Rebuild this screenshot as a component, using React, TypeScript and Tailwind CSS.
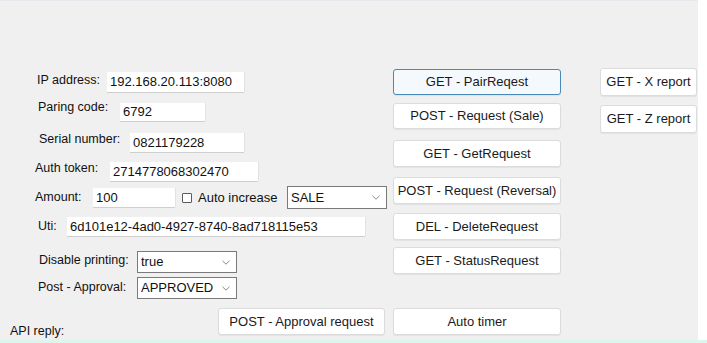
import React from 'react';

const font = { fontFamily: '"Liberation Sans", Arial, sans-serif' };

const Chevron: React.FC = () => (
  <svg width="8" height="5" viewBox="0 0 8 5" className="shrink-0">
    <path d="M0.5 0.8 L4 4.2 L7.5 0.8" fill="none" stroke="#8a8a8a" strokeWidth="1" />
  </svg>
);

const TextBox: React.FC<{ value: string; w: string; h: string; mt?: string }> = ({ value, w, h, mt = '' }) => (
  <div
    className={`${w} ${h} ${mt} shrink-0 bg-white pl-[3px] flex items-center text-[13px] text-[#111] shadow-[0_1px_0_#cfcfcf,1px_0_0_#e2e2e2] overflow-hidden whitespace-nowrap`}
  >
    {value}
  </div>
);

const Dropdown: React.FC<{ value: string; w: string; h: string; mt?: string }> = ({ value, w, h, mt = '' }) => (
  <div
    className={`${w} ${h} ${mt} shrink-0 bg-white border border-[#7a7a7a] pl-[3px] pr-[6px] flex items-center justify-between text-[13px] text-[#111]`}
  >
    <span>{value}</span>
    <Chevron />
  </div>
);

const Label: React.FC<{ text: string; ml: string; w: string; mt?: string }> = ({ text, ml, w, mt = '' }) => (
  <span className={`${ml} ${w} ${mt} shrink-0 text-[12.5px] leading-[15px] text-[#111] whitespace-nowrap`}>{text}</span>
);

const Btn: React.FC<{ text: string; h: string; mt: string; active?: boolean }> = ({ text, h, mt, active }) => (
  <button
    className={`${h} ${mt} w-full shrink-0 rounded-[3px] border text-[13px] text-[#1a1a1a] flex items-center justify-center shadow-[0_1px_1px_rgba(0,0,0,0.06)] ${
      active ? 'border-[#4a8ab8] bg-[#f4f9fd]' : 'border-[#dcdcdc] bg-white'
    }`}
  >
    {text}
  </button>
);

const App: React.FC = () => {
  return (
    <div className="w-[707px] h-[343px] flex flex-col overflow-hidden" style={font}>
      <div className="flex h-[340px]">
        <div className="w-[698px] h-full bg-[#f0f0f0] border-t border-[#e6e8ee] flex">
          {/* left form */}
          <div className="w-[393px] flex flex-col pt-[71px]">
            <div className="h-[28px] flex items-start">
              <Label text="IP address:" ml="ml-[37px]" w="w-[70px]" mt="mt-[1px]" />
              <TextBox value="192.168.20.113:8080" w="w-[137px]" h="h-[20px]" />
            </div>
            <div className="h-[32px] flex items-start">
              <Label text="Paring code:" ml="ml-[38px]" w="w-[82px]" />
              <TextBox value="6792" w="w-[85px]" h="h-[18px]" mt="mt-[3px]" />
            </div>
            <div className="h-[29px] flex items-start">
              <Label text="Serial number:" ml="ml-[39px]" w="w-[91px]" />
              <TextBox value="0821179228" w="w-[114px]" h="h-[19px]" mt="mt-[1px]" />
            </div>
            <div className="h-[25px] flex items-start">
              <Label text="Auth token:" ml="ml-[35px]" w="w-[75px]" />
              <TextBox value="2714778068302470" w="w-[148px]" h="h-[19px]" mt="mt-[1px]" />
            </div>
            <div className="h-[31px] flex items-start">
              <Label text="Amount:" ml="ml-[35px]" w="w-[58px]" mt="mt-[4px]" />
              <TextBox value="100" w="w-[82px]" h="h-[19px]" mt="mt-[2px]" />
              <span className="ml-[7px] w-[105px] shrink-0 flex items-center mt-[4px] h-[15px]">
                <span className="w-[10px] h-[10px] border border-[#5a5a5a] bg-white rounded-[1px] shrink-0" />
                <span className="ml-[6px] text-[13px] leading-[15px] text-[#111] whitespace-nowrap">Auto increase</span>
              </span>
              <Dropdown value="SALE" w="w-[100px]" h="h-[23px]" />
            </div>
            <div className="h-[34px] flex items-start">
              <Label text="Uti:" ml="ml-[38px]" w="w-[29px]" mt="mt-[2px]" />
              <TextBox value="6d101e12-4ad0-4927-8740-8ad718115e53" w="w-[298px]" h="h-[19px]" />
            </div>
            <div className="h-[26px] flex items-start">
              <Label text="Disable printing:" ml="ml-[39px]" w="w-[98px]" mt="mt-[2px]" />
              <Dropdown value="true" w="w-[100px]" h="h-[22px]" />
            </div>
            <div className="h-[31px] flex items-start">
              <Label text="Post - Approval:" ml="ml-[38px]" w="w-[99px]" mt="mt-[3px]" />
              <Dropdown value="APPROVED" w="w-[100px]" h="h-[22px]" />
            </div>
            <div className="h-[27px] flex items-start">
              <Label text="API reply:" ml="ml-[10px]" w="w-[208px]" mt="mt-[16px]" />
              <div className="w-[167px] shrink-0">
                <Btn text="POST - Approval request" h="h-[27px]" mt="mt-0" />
              </div>
            </div>
          </div>

          {/* middle buttons */}
          <div className="w-[168px] flex flex-col pt-[68px]">
            <Btn text="GET - PairReqest" h="h-[26px]" mt="mt-0" active />
            <Btn text="POST - Request (Sale)" h="h-[26px]" mt="mt-[8px]" />
            <Btn text="GET - GetRequest" h="h-[27px]" mt="mt-[11px]" />
            <Btn text="POST - Request (Reversal)" h="h-[27px]" mt="mt-[10px]" />
            <Btn text="DEL - DeleteRequest" h="h-[27px]" mt="mt-[9px]" />
            <Btn text="GET - StatusRequest" h="h-[27px]" mt="mt-[7px]" />
            <Btn text="Auto timer" h="h-[27px]" mt="mt-[34px]" />
          </div>

          {/* right buttons */}
          <div className="ml-[39px] w-[97px] flex flex-col pt-[67px]">
            <Btn text="GET - X report" h="h-[28px]" mt="mt-0" />
            <Btn text="GET - Z report" h="h-[28px]" mt="mt-[9px]" />
          </div>
        </div>
        <div className="flex-1 bg-white" />
      </div>
      <div className="h-[3px] bg-[#dcf6ee]" />
    </div>
  );
};

export default App;
